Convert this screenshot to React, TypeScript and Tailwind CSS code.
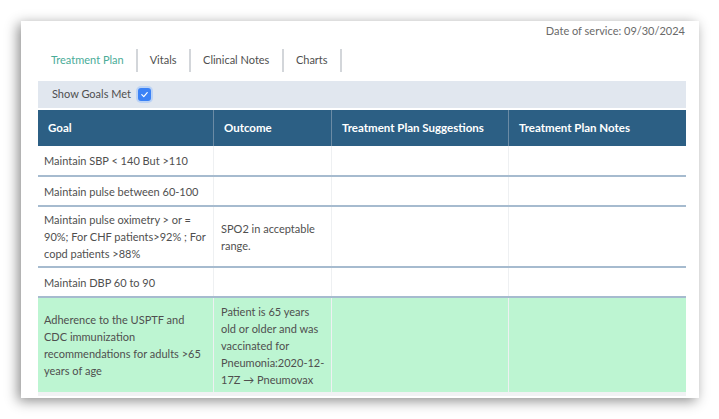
import React from "react";

const rows = [
  { goal: ["Maintain SBP < 140 But >110"], outcome: [], met: false, h: "h-[29px]" },
  { goal: ["Maintain pulse between 60-100"], outcome: [], met: false, h: "h-[30px]" },
  {
    goal: ["Maintain pulse oximetry > or =", "90%; For CHF patients>92% ; For", "copd patients >88%"],
    outcome: ["SPO2 in acceptable", "range."],
    met: false,
    h: "h-[61px]",
  },
  { goal: ["Maintain DBP 60 to 90"], outcome: [], met: false, h: "h-[30px]" },
  {
    goal: ["Adherence to the USPTF and", "CDC immunization", "recommendations for adults >65", "years of age"],
    outcome: ["Patient is 65 years", "old or older and was", "vaccinated for", "Pneumonia:2020-12-", "17Z \u2192 Pneumovax"],
    met: true,
    h: "h-[96px]",
  },
];

export default function App() {
  return (
    <div
      className="w-[719px] h-[419px] bg-white pl-[21px] pt-[21px] overflow-hidden"
      style={{ fontFamily: "Lato, 'Noto Sans', sans-serif" }}
    >
      <div className="w-[678px] h-[377px] bg-white shadow-[-3px_3px_12px_rgba(0,0,0,0.45)] overflow-hidden flex flex-col">
        <div className="flex justify-end pr-[14px] pt-[1px] h-[18px] text-[11px] leading-[18px] text-[#6a6a6a]">
          Date of service: 09/30/2024
        </div>
        <div className="flex items-center pl-[18px] mt-[10px] h-[23px] text-[11px] text-[#4f4f4f]">
          <div className="px-[12px] text-[#4aac98] border-r-2 border-[#d3d6da] h-full flex items-center">Treatment Plan</div>
          <div className="px-[12px] border-r-2 border-[#d3d6da] h-full flex items-center">Vitals</div>
          <div className="px-[12.5px] border-r-2 border-[#d3d6da] h-full flex items-center">Clinical Notes</div>
          <div className="px-[12px] border-r-2 border-[#d3d6da] h-full flex items-center">Charts</div>
        </div>
        <div className="mx-[17px] mt-[9px] w-[648px]">
          <div className="h-[27px] bg-[#e1e7ef] flex items-center pl-[14px] text-[11px] text-[#4f4f4f]">
            <span>Show Goals Met</span>
            <span className="ml-[7px] w-[13px] h-[13px] rounded-[3px] bg-[#3b82f6] ring-2 ring-[#bcd3f5] flex items-center justify-center">
              <svg width="9" height="9" viewBox="0 0 10 10" fill="none">
                <path d="M2 5.2 L4.2 7.3 L8 2.8" stroke="white" strokeWidth="1.3" strokeLinecap="round" strokeLinejoin="round" />
              </svg>
            </span>
          </div>
          <div className="h-[2px] bg-white" />
          <div className="grid grid-cols-[176px_118px_177px_177px] h-[36px] bg-[#2c5f84] text-white font-bold text-[11.5px]">
            <div className="flex items-center pl-[10px] border-r border-[#6b8ba5]">Goal</div>
            <div className="flex items-center pl-[10px] border-r border-[#6b8ba5]">Outcome</div>
            <div className="flex items-center pl-[10px] border-r border-[#6b8ba5]">Treatment Plan Suggestions</div>
            <div className="flex items-center pl-[10px]">Treatment Plan Notes</div>
          </div>
          {rows.map((r, i) => (
            <div
              key={i}
              className={`grid grid-cols-[176px_118px_177px_177px] text-[11px] leading-[17px] text-[#4f4f4f] ${
                i > 0 ? "border-t-2 border-[#a6bbcf]" : ""
              } ${r.met ? "bg-[#bdf5d2]" : "bg-white"} ${r.h}`}
            >
              <div className="flex flex-col justify-center pl-[6px] border-r border-[#eef0f2] whitespace-nowrap">
                {r.goal.map((l, j) => (
                  <span key={j}>{l}</span>
                ))}
              </div>
              <div className="flex flex-col justify-center pl-[7px] border-r border-[#eef0f2] whitespace-nowrap">
                {r.outcome.map((l, j) => (
                  <span key={j}>{l}</span>
                ))}
              </div>
              <div className="border-r border-[#eef0f2]" />
              <div />
            </div>
          ))}
          <div className="h-[4px] bg-[#f1f2f4]" />
        </div>
      </div>
    </div>
  );
}
